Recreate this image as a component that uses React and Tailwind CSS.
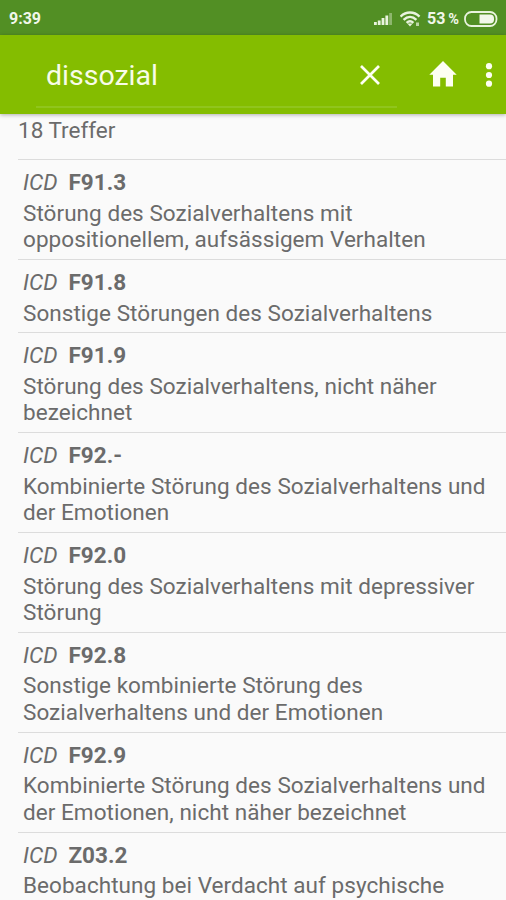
import React from 'react';

const results = [
    { code: 'F91.3', lines: ['Störung des Sozialverhaltens mit', 'oppositionellem, aufsässigem Verhalten'] },
    { code: 'F91.8', lines: ['Sonstige Störungen des Sozialverhaltens'] },
    { code: 'F91.9', lines: ['Störung des Sozialverhaltens, nicht näher', 'bezeichnet'] },
    { code: 'F92.-', lines: ['Kombinierte Störung des Sozialverhaltens und', 'der Emotionen'] },
    { code: 'F92.0', lines: ['Störung des Sozialverhaltens mit depressiver', 'Störung'] },
    { code: 'F92.8', lines: ['Sonstige kombinierte Störung des', 'Sozialverhaltens und der Emotionen'] },
    { code: 'F92.9', lines: ['Kombinierte Störung des Sozialverhaltens und', 'der Emotionen, nicht näher bezeichnet'] },
    { code: 'Z03.2', lines: ['Beobachtung bei Verdacht auf psychische'] },
];

const SignalIcon = () => (
    <svg width="20" height="14" viewBox="0 0 20 14" fill="#e9f3de" className="block">
        <rect x="0" y="10" width="2.8" height="3" />
        <rect x="3.8" y="8.5" width="2.8" height="4.5" />
        <rect x="7.6" y="6" width="2.8" height="7" />
        <rect x="11.4" y="3.5" width="2.8" height="9.5" />
        <rect x="15.2" y="1" width="2.8" height="12" opacity="0.4" />
    </svg>
);

const WifiIcon = () => (
    <svg width="22" height="16" viewBox="0 0 22 16" fill="none" stroke="#e9f3de" strokeWidth="2.4" className="block">
        <path d="M0.5 5.6C6 0.2 14 0.2 19.5 5.6" />
        <path d="M3.6 8.9C7.6 5 12.4 5 16.4 8.9" />
        <path d="M6.6 11.8C9 9.5 11 9.5 13.4 11.8" />
        <path d="M7.4 12.6h5.2l-2.6 2.8z" fill="#e9f3de" stroke="none" />
        <rect x="16" y="11.5" width="3" height="3.5" fill="#e9f3de" stroke="none" opacity="0.7" />
    </svg>
);

const BatteryIcon = () => (
    <svg width="34" height="16" viewBox="0 0 34 16" className="block">
        <rect x="1" y="1" width="31.5" height="14" rx="6.5" fill="none" stroke="#e9f3de" strokeWidth="1.8" />
        <path d="M15.5 3.5H26a4 4 0 0 1 4 4v1a4 4 0 0 1-4 4H15.5z" fill="#f1f7ea" />
    </svg>
);

const StatusBar = () => (
    <div className="flex h-[35px] shrink-0 items-center bg-[#528f24] pl-[9px] pr-[7px] pt-[2px] text-[#f1f7ea]">
        <span className="text-[16px] font-bold leading-none">9:39</span>
        <div className="ml-auto flex items-center">
            <SignalIcon />
            <div className="ml-[6px]"><WifiIcon /></div>
            <div className="ml-[5px] flex w-[34px] items-baseline gap-[3px] whitespace-nowrap pt-px font-bold leading-none">
                <span className="text-[16px]">53</span>
                <span className="text-[14.5px]">%</span>
            </div>
            <div className="ml-[3px] mr-px"><BatteryIcon /></div>
        </div>
    </div>
);

const SearchBar = () => (
    <div className="z-10 flex h-[79px] shrink-0 items-start bg-[#84bd00] shadow-[0_1px_4px_rgba(0,0,0,0.3)]">
        <div className="ml-[36px] flex h-[73px] w-[361px] items-center border-b-2 border-[#90c51d] pl-[10px] pt-[8px]">
            <span className="pt-[3px] text-[28.5px] leading-none text-[#f8fce8]">dissozial</span>
            <svg width="20" height="20" viewBox="0 0 20 20" className="ml-auto mr-[17px] block" stroke="#fdfff2" strokeWidth="2.7">
                <path d="M1 1L19 19M19 1L1 19" />
            </svg>
        </div>
        <svg width="28" height="26" viewBox="0 0 28 26" fill="#fdfff2" className="ml-[32px] mt-[26px] block">
            <path d="M14 0L0.3 13.8H4V25.5H11.2V16.8H16.8V25.5H24V13.8H27.7Z" />
        </svg>
        <svg width="8" height="24" viewBox="0 0 8 24" fill="#fdfff2" className="ml-[28px] mt-[28px] block">
            <circle cx="4" cy="3.2" r="3.1" />
            <circle cx="4" cy="12" r="3.1" />
            <circle cx="4" cy="20.7" r="3.1" />
        </svg>
    </div>
);

const ResultRow = ({ code, lines }) => (
    <li className="ml-[18px] border-t border-[#dcdcdc] pb-[6.2px] pl-[5px] pt-[9px]">
        <div className="flex gap-[11px] leading-[26.6px]">
            <span className="italic">ICD</span>
            <span className="font-bold">{code}</span>
        </div>
        <div className="mt-[3.9px] whitespace-nowrap leading-[26.6px] tracking-[0.05px]">
            {lines.map((line) => (
                <div key={line}>{line}</div>
            ))}
        </div>
    </li>
);

const App = () => (
    <div className="flex h-[900px] w-[506px] flex-col overflow-hidden bg-[#fafafa] font-['Roboto',sans-serif] text-[22.5px] text-[#6b6b6b]">
        <StatusBar />
        <SearchBar />
        <div className="h-[45.2px] shrink-0 pl-[18px] pt-[3px] leading-[26px]">18 Treffer</div>
        <ul className="min-h-0 flex-1 overflow-hidden">
            {results.map((result) => (
                <ResultRow key={result.code} {...result} />
            ))}
        </ul>
    </div>
);

export default App;
